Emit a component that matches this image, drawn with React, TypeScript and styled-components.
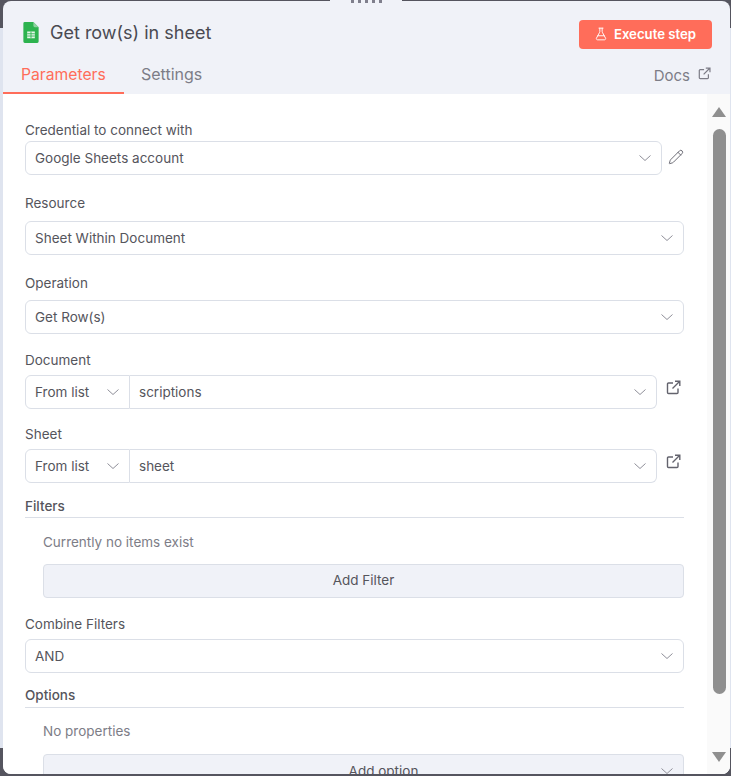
import React from 'react';
import styled, { createGlobalStyle } from 'styled-components';
import { FlaskConical, Pencil } from 'lucide-react';

const Global = createGlobalStyle`
  html, body { margin: 0; padding: 0; }
  body { font-family: Inter, "Liberation Sans", sans-serif; }
`;

const Backdrop = styled.div`
  position: relative;
  width: 731px;
  height: 776px;
  box-sizing: border-box;
  padding: 1px 1px 2px 3px;
  overflow: hidden;
  background: linear-gradient(to bottom, #55555f 0, #55555f 28px, #dfe4ef 28px, #dfe4ef 748px, #55555f 748px);
`;

const Panel = styled.div`
  height: 100%;
  display: flex;
  flex-direction: column;
  border-radius: 8px;
  overflow: hidden;
  background: #f0f2f8;
`;

const Handle = styled.div`
  position: absolute;
  top: 0;
  left: 330px;
  width: 72px;
  height: 6px;
  display: flex;
  justify-content: center;
  gap: 4px;
  background: #f0f2f8;
`;

const Dot = styled.span`
  width: 3px;
  height: 3px;
  background: #7f7f8c;
`;

const Header = styled.header`
  height: 93px;
  flex: none;
  display: flex;
  flex-direction: column;
  box-sizing: border-box;
`;

const TitleRow = styled.div`
  display: flex;
  align-items: center;
  height: 33px;
  margin-top: 17px;
  padding: 0 18px 0 20px;
`;

const Logo = styled.span`
  display: flex;
  margin-bottom: 4px;
`;

const Title = styled.h1`
  margin: 0 0 4px 11px;
  flex: 1;
  font-size: 18px;
  font-weight: 400;
  color: #4a4a52;
`;

const RunButton = styled.button`
  width: 133px;
  height: 29px;
  display: flex;
  align-items: center;
  justify-content: center;
  gap: 6px;
  border: 0;
  border-radius: 4px;
  padding: 0 1px 1px 0;
  font: 600 13.2px Inter, sans-serif;
  color: #fff;
  background: #ff6d5a;
`;

const Tabs = styled.nav`
  display: flex;
  align-items: flex-end;
  height: 43px;
`;

const Tab = styled.span<{ $active?: boolean }>`
  box-sizing: border-box;
  height: 30px;
  width: ${(p) => (p.$active ? '121px' : 'auto')};
  padding-left: ${(p) => (p.$active ? '18px' : '17px')};
  font-size: ${(p) => (p.$active ? '15.7px' : '16px')};
  line-height: ${(p) => (p.$active ? '21px' : '20px')};
  color: ${(p) => (p.$active ? '#ff6d5a' : '#7d7d87')};
  border-bottom: ${(p) => (p.$active ? '2px solid #ff6d5a' : '0')};
`;

const Docs = styled.span`
  margin-left: auto;
  height: 30px;
  padding-right: 19px;
  display: flex;
  align-items: flex-start;
  gap: 8px;
  font-size: 15px;
  line-height: 23px;
  color: #7d7d87;
`;

const DocsIcon = styled.span`
  display: flex;
  margin-top: 3px;
`;

const Body = styled.div`
  flex: 1;
  min-height: 0;
  display: flex;
  background: #fff;
`;

const Content = styled.main`
  flex: 1;
  min-width: 0;
  overflow: hidden;
  box-sizing: border-box;
  padding: 27px 23px 0 22px;
`;

const Scroll = styled.div`
  box-sizing: border-box;
  width: 23px;
  padding-left: 1px;
  flex: none;
  display: flex;
  flex-direction: column;
  align-items: center;
  background: #fafafa;
`;

const ArrowUp = styled.div`
  margin-top: 13px;
  width: 0;
  height: 0;
  border-left: 7.5px solid transparent;
  border-right: 7.5px solid transparent;
  border-bottom: 10px solid #8f8f8f;
`;

const ArrowDown = styled.div`
  margin-top: 58px;
  width: 0;
  height: 0;
  border-left: 7.5px solid transparent;
  border-right: 7.5px solid transparent;
  border-top: 10px solid #8f8f8f;
`;

const Thumb = styled.div`
  margin-top: 12px;
  width: 13px;
  height: 565px;
  border-radius: 7px;
  background: #8f8f8f;
`;

const Field = styled.section<{ $top: number }>`
  margin-top: ${(p) => p.$top}px;
`;

const Label = styled.label<{ $gap: number }>`
  display: block;
  height: 18px;
  margin-bottom: ${(p) => p.$gap}px;
  font-size: 13.5px;
  line-height: 18px;
  color: #55555c;
`;

const Row = styled.div`
  display: flex;
  align-items: flex-start;
`;

const Select = styled.div`
  flex: 1;
  min-width: 0;
  box-sizing: border-box;
  height: 34px;
  display: flex;
  align-items: center;
  justify-content: space-between;
  padding: 0 8px 0 9px;
  border: 1px solid #dbdfe7;
  border-radius: 6px;
  background: #fff;
  font-size: 13.5px;
  color: #55555c;
`;

const ModeSelect = styled(Select)`
  flex: none;
  width: 105px;
  border-radius: 6px 0 0 6px;
`;

const ValueSelect = styled(Select)`
  border-left: 0;
  border-radius: 0 6px 6px 0;
`;

const SideIcon = styled.span<{ $width: number; $top: number; $right: number }>`
  flex: none;
  box-sizing: border-box;
  width: ${(p) => p.$width}px;
  display: flex;
  justify-content: flex-end;
  padding: ${(p) => p.$top}px ${(p) => p.$right}px 0 0;
  color: #63636d;
`;

const Section = styled.h3<{ $top: number; $height: number }>`
  margin: ${(p) => p.$top}px 0 0;
  height: ${(p) => p.$height}px;
  border-bottom: 1px solid #dbdfe7;
  font-size: 13.5px;
  font-weight: 500;
  line-height: 18px;
  color: #55555c;
`;

const Empty = styled.p<{ $top: number; $bottom: number }>`
  margin: ${(p) => p.$top}px 0 ${(p) => p.$bottom}px 18px;
  height: 18px;
  font-size: 13.5px;
  line-height: 18px;
  color: #7d7d87;
`;

const AddButton = styled.button`
  display: block;
  position: relative;
  box-sizing: border-box;
  width: calc(100% - 18px);
  height: 34px;
  margin-left: 18px;
  padding: 0 0 2px;
  border: 1px solid #dbdfe7;
  border-radius: 4px;
  background: #f0f2f8;
  font: 400 13.5px Inter, sans-serif;
  color: #55555c;
`;

const AddOptionButton = styled(AddButton)`
  padding: 0 0 0 40px;
`;

const ButtonChevron = styled.span`
  position: absolute;
  top: 8px;
  right: 8px;
  display: flex;
`;

const Chevron = () => (
  <svg width="16" height="16" viewBox="0 0 16 16" fill="none" stroke="#8f8f99" strokeWidth="1">
    <path d="M2.500 5.500 8 10.500l5.500-5" />
  </svg>
);

const OpenIcon = ({ size = 15 }: { size?: number }) => (
  <svg width={size} height={size} viewBox="0 0 15 15" fill="none" stroke="currentColor" strokeWidth="1.4">
    <path d="M7 3H2.500a1 1 0 0 0-1 1v8.500a1 1 0 0 0 1 1H11a1 1 0 0 0 1-1V8.500" />
    <path d="M6.500 8.500 13.500 1.500M9 1.200h4.800V6" />
  </svg>
);

const SheetsLogo = () => (
  <svg width="16" height="21" viewBox="0 0 16 22">
    <path d="M1.500 0H10.500L16 5.500V20.500A1.500 1.500 0 0 1 14.500 22H1.500A1.500 1.500 0 0 1 0 20.500V1.500A1.500 1.500 0 0 1 1.500 0Z" fill="#2db34f" />
    <path d="M10.500 0 16 5.500H12A1.500 1.500 0 0 1 10.500 4Z" fill="#8ed1a0" />
    <path d="M4 10h8v7H4z" fill="#e6f6ea" />
    <path d="M4 12.300h8M4 14.700h8M8 10v7" stroke="#2db34f" strokeWidth="0.9" />
  </svg>
);

const ResourceRow = ({ value }: { value: string }) => (
  <Row>
    <ModeSelect>
      From list
      <Chevron />
    </ModeSelect>
    <ValueSelect>
      {value}
      <Chevron />
    </ValueSelect>
    <SideIcon $width={27} $top={5} $right={3}>
      <OpenIcon />
    </SideIcon>
  </Row>
);

const App = () => (
  <Backdrop>
    <Global />
    <Panel>
      <Header>
        <TitleRow>
          <Logo>
            <SheetsLogo />
          </Logo>
          <Title>Get row(s) in sheet</Title>
          <RunButton>
            <FlaskConical size={14} strokeWidth={1.6} />
            Execute step
          </RunButton>
        </TitleRow>
        <Tabs>
          <Tab $active>Parameters</Tab>
          <Tab>Settings</Tab>
          <Docs>
            Docs
            <DocsIcon>
              <OpenIcon size={13} />
            </DocsIcon>
          </Docs>
        </Tabs>
      </Header>
      <Body>
        <Content>
          <Field $top={0}>
            <Label $gap={2}>Credential to connect with</Label>
            <Row>
              <Select>
                Google Sheets account
                <Chevron />
              </Select>
              <SideIcon $width={22} $top={8} $right={0}>
                <Pencil size={16} strokeWidth={1.4} />
              </SideIcon>
            </Row>
          </Field>
          <Field $top={19}>
            <Label $gap={9}>Resource</Label>
            <Select>
              Sheet Within Document
              <Chevron />
            </Select>
          </Field>
          <Field $top={19}>
            <Label $gap={8}>Operation</Label>
            <Select>
              Get Row(s)
              <Chevron />
            </Select>
          </Field>
          <Field $top={17}>
            <Label $gap={6}>Document</Label>
            <ResourceRow value="scriptions" />
          </Field>
          <Field $top={16}>
            <Label $gap={6}>Sheet</Label>
            <ResourceRow value="sheet" />
          </Field>
          <Section $top={14} $height={20}>Filters</Section>
          <Empty $top={15} $bottom={13}>Currently no items exist</Empty>
          <AddButton>Add Filter</AddButton>
          <Field $top={17}>
            <Label $gap={6}>Combine Filters</Label>
            <Select>
              AND
              <Chevron />
            </Select>
          </Field>
          <Section $top={13} $height={21}>Options</Section>
          <Empty $top={14} $bottom={14}>No properties</Empty>
          <AddOptionButton>
            Add option
            <ButtonChevron>
              <Chevron />
            </ButtonChevron>
          </AddOptionButton>
        </Content>
        <Scroll>
          <ArrowUp />
          <Thumb />
          <ArrowDown />
        </Scroll>
      </Body>
    </Panel>
    <Handle>
      <Dot />
      <Dot />
      <Dot />
      <Dot />
      <Dot />
    </Handle>
  </Backdrop>
);

export default App;
